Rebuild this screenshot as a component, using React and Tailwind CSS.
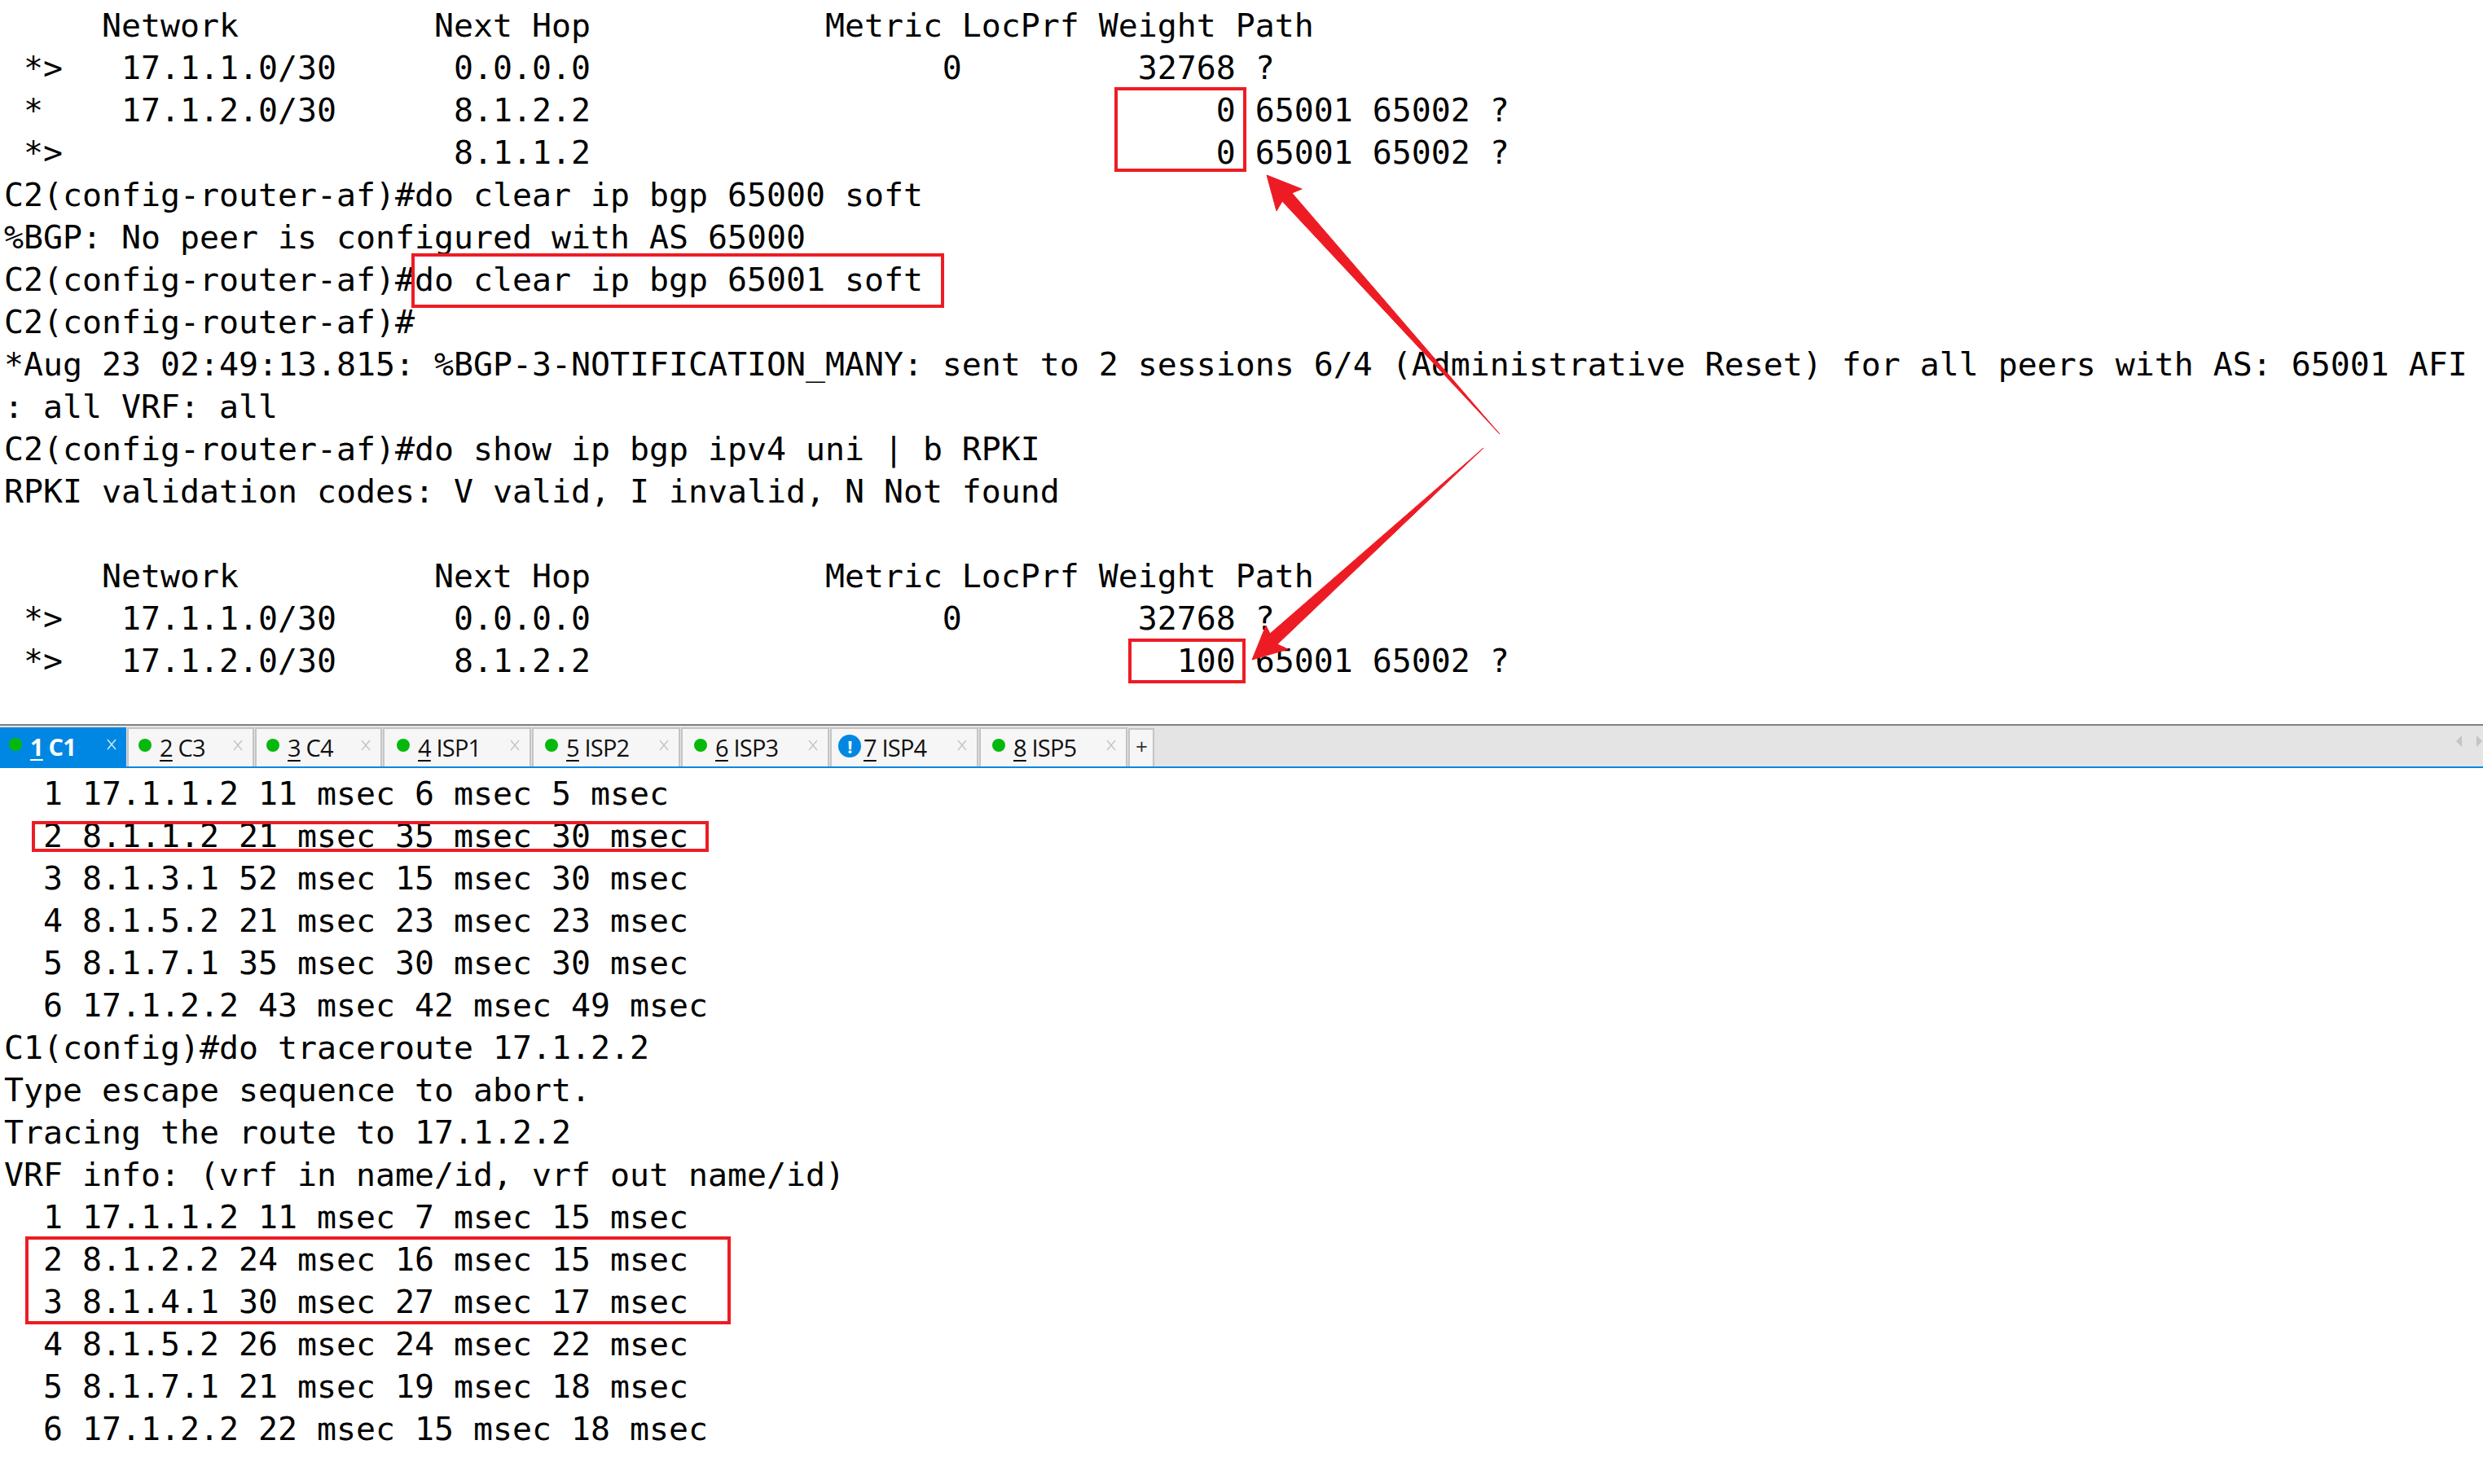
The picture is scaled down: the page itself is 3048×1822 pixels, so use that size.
const top = [
  "     Network          Next Hop            Metric LocPrf Weight Path",
  " *>   17.1.1.0/30      0.0.0.0                  0         32768 ?",
  " *    17.1.2.0/30      8.1.2.2                                0 65001 65002 ?",
  " *>                    8.1.1.2                                0 65001 65002 ?",
  "C2(config-router-af)#do clear ip bgp 65000 soft",
  "%BGP: No peer is configured with AS 65000",
  "C2(config-router-af)#do clear ip bgp 65001 soft",
  "C2(config-router-af)#",
  "*Aug 23 02:49:13.815: %BGP-3-NOTIFICATION_MANY: sent to 2 sessions 6/4 (Administrative Reset) for all peers with AS: 65001 AFI",
  ": all VRF: all",
  "C2(config-router-af)#do show ip bgp ipv4 uni | b RPKI",
  "RPKI validation codes: V valid, I invalid, N Not found",
  " ",
  "     Network          Next Hop            Metric LocPrf Weight Path",
  " *>   17.1.1.0/30      0.0.0.0                  0         32768 ?",
  " *>   17.1.2.0/30      8.1.2.2                              100 65001 65002 ?",
];

const bottom = [
  "  1 17.1.1.2 11 msec 6 msec 5 msec",
  "  2 8.1.1.2 21 msec 35 msec 30 msec",
  "  3 8.1.3.1 52 msec 15 msec 30 msec",
  "  4 8.1.5.2 21 msec 23 msec 23 msec",
  "  5 8.1.7.1 35 msec 30 msec 30 msec",
  "  6 17.1.2.2 43 msec 42 msec 49 msec",
  "C1(config)#do traceroute 17.1.2.2",
  "Type escape sequence to abort.",
  "Tracing the route to 17.1.2.2",
  "VRF info: (vrf in name/id, vrf out name/id)",
  "  1 17.1.1.2 11 msec 7 msec 15 msec",
  "  2 8.1.2.2 24 msec 16 msec 15 msec",
  "  3 8.1.4.1 30 msec 27 msec 17 msec",
  "  4 8.1.5.2 26 msec 24 msec 22 msec",
  "  5 8.1.7.1 21 msec 19 msec 18 msec",
  "  6 17.1.2.2 22 msec 15 msec 18 msec",
];

const tabs = [
  { n: "1", name: "C1", w: "w-[155px]", pad: "pl-[11px]", gap: "gap-[10px]", active: true },
  { n: "2", name: "C3", w: "w-[156px]", pad: "pl-[12px]", gap: "gap-[10px]" },
  { n: "3", name: "C4", w: "w-[156px]", pad: "pl-[12px]", gap: "gap-[10px]" },
  { n: "4", name: "ISP1", w: "w-[182px]", pad: "pl-[15px]", gap: "gap-[10px]" },
  { n: "5", name: "ISP2", w: "w-[182px]", pad: "pl-[14px]", gap: "gap-[10px]" },
  { n: "6", name: "ISP3", w: "w-[182px]", pad: "pl-[14px]", gap: "gap-[10px]" },
  { n: "7", name: "ISP4", w: "w-[182px]", pad: "pl-[8px]", gap: "gap-[3px]", info: true },
  { n: "8", name: "ISP5", w: "w-[182px]", pad: "pl-[14px]", gap: "gap-[10px]" },
];

function Lines({ items }) {
  return items.map((l, i) => (
    <div key={i} className="h-[52px] leading-[52px] whitespace-pre">{l}</div>
  ));
}

function Tab({ t }) {
  return (
    <div
      className={`${t.w} ${t.pad} ${t.gap} h-[48px] shrink-0 flex items-center ${
        t.active
          ? "bg-[#0087e3] text-white font-bold"
          : "bg-[#f6f6f6] border-x-2 border-t-2 border-[#c4c4c4] text-[#111]"
      }`}
    >
      {t.info ? (
        <span className="w-[28px] h-[28px] rounded-full bg-[#0087e3] text-white font-bold text-[22px] leading-[28px] text-center shrink-0 mb-[4px]">!</span>
      ) : (
        <span className="w-[16px] h-[16px] rounded-full bg-[#06b80c] shrink-0 mb-[6px]" />
      )}
      <span className="whitespace-pre">
        <span className="underline underline-offset-[4px]">{t.n}</span> {t.name}
      </span>
      <svg
        className={`ml-auto mr-[12px] mb-[6px] shrink-0 ${t.active ? "text-[#d5ebfa]" : "text-[#c4c4c4]"}`}
        width="12"
        height="14"
        viewBox="0 0 12 14"
        fill="none"
        stroke="currentColor"
        strokeWidth="1.4"
      >
        <path d="M1 1L11 13M11 1L1 13" />
      </svg>
    </div>
  );
}

export default function App() {
  return (
    <div className="relative w-[3048px] h-[1822px] overflow-hidden bg-white text-black font-['DejaVu_Sans_Mono',monospace] text-[39.87px]">
      <section className="h-[889px] pt-[5px] pl-[5px]">
        <Lines items={top} />
      </section>

      <div className="h-[54px] flex items-end gap-[1px] border-t-2 border-[#808080] border-b-[2px] border-b-[#0087e3] bg-[#e4e4e4] font-['Open_Sans',sans-serif] text-[29px] tracking-[-0.8px]">
        {tabs.map((t) => (
          <Tab key={t.n} t={t} />
        ))}
        <div className="w-[32px] h-[47px] shrink-0 bg-[#f6f6f6] border-x-2 border-t-2 border-[#c4c4c4] text-[#333] text-[26px] leading-[40px] text-center">+</div>
        <div className="ml-auto h-[48px] pb-[15px] flex items-center gap-[18px] pr-[1px]">
          <svg width="7" height="14" viewBox="0 0 7 14"><path d="M7 0V14L0 7Z" fill="#c4c4c4" /></svg>
          <svg width="7" height="14" viewBox="0 0 7 14"><path d="M0 0V14L7 7Z" fill="#c4c4c4" /></svg>
        </div>
      </div>

      <section className="pt-[5px] pl-[5px]">
        <Lines items={bottom} />
      </section>

      <div className="absolute left-[1368px] top-[107px] w-[162px] h-[104px] border-4 border-[#ed1c24]" />
      <div className="absolute left-[505px] top-[311px] w-[654px] h-[67px] border-4 border-[#ed1c24]" />
      <div className="absolute left-[1385px] top-[784px] w-[144px] h-[55px] border-4 border-[#ed1c24]" />
      <div className="absolute left-[39px] top-[1008px] w-[831px] h-[38px] border-4 border-[#ed1c24]" />
      <div className="absolute left-[31px] top-[1518px] w-[866px] h-[108px] border-4 border-[#ed1c24]" />

      <svg className="absolute left-0 top-0 pointer-events-none" width="3048" height="1822" viewBox="0 0 3048 1822">
        <path d="M1555 215 L1598 232 L1586 237 L1841 533 L1574 247 L1567 259 Z" fill="#ed1c24" stroke="#ed1c24" strokeWidth="1" />
        <path d="M1537 810 L1554 768 L1559 778 L1821 550 L1568 791 L1581 797 Z" fill="#ed1c24" stroke="#ed1c24" strokeWidth="1" />
      </svg>
    </div>
  );
}
